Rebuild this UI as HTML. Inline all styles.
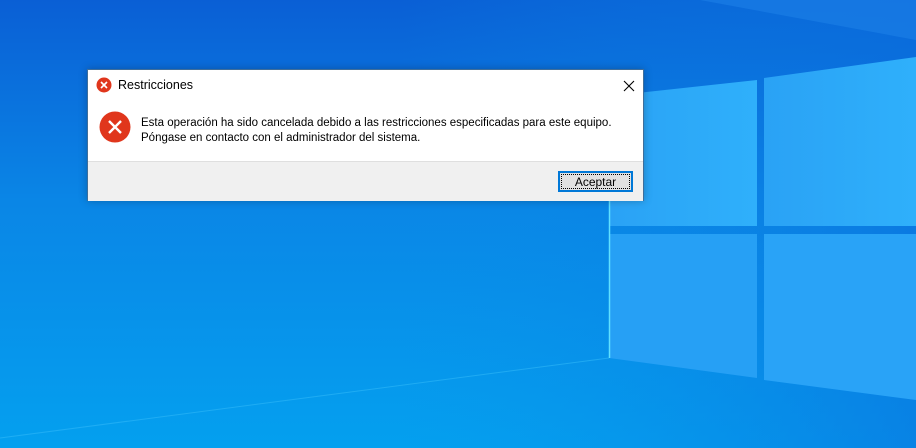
<!DOCTYPE html>
<html><head><meta charset="utf-8"><style>
body{margin:0;width:916px;height:448px;overflow:hidden;font-family:"Liberation Sans","DejaVu Sans",sans-serif;position:relative}
.bg{position:absolute;left:0;top:0}
.dlg{position:absolute;left:87px;top:69px;width:555px;height:130px;border:1px solid #3f6e9a;background:#fff;box-shadow:0 0 8px rgba(0,0,0,.25)}
.title{position:absolute;left:30px;top:8px;font-size:12.5px;color:#000}
.close{position:absolute;left:535px;top:10px}
.msg{position:absolute;left:53px;top:46px;font-size:11.5px;line-height:15px;color:#000}
.foot{position:absolute;left:0;top:91px;width:555px;height:39px;background:#f0f0f0;border-top:1px solid #dfdfdf}
.btn{position:absolute;left:470px;top:9px;width:73px;height:19px;border:1px solid #0078d7;box-shadow:inset 0 0 0 1px #0078d7;background:#e1e1e1;font-size:12px;text-align:center;line-height:19px;color:#000}
.btn span{position:absolute;left:2px;top:2px;right:2px;bottom:2px;border:1px dotted #000;line-height:15px}
</style></head><body>
<svg class="bg" width="916" height="448">
<defs>
<linearGradient id="g" x1="0" y1="0" x2="0" y2="1">
<stop offset="0" stop-color="#0a5fd5"/><stop offset="0.45" stop-color="#0a86e6"/><stop offset="1" stop-color="#04a0ef"/>
</linearGradient>
<linearGradient id="h" x1="0" y1="0" x2="1" y2="0">
<stop offset="0" stop-color="#0a8fe8" stop-opacity="0"/><stop offset="1" stop-color="#0a70de" stop-opacity=".6"/>
</linearGradient>
<linearGradient id="p" x1="0" y1="0" x2="1" y2="0">
<stop offset="0" stop-color="#2aa2f5"/><stop offset="1" stop-color="#2fb0fb"/>
</linearGradient>
</defs>
<rect width="916" height="448" fill="url(#g)"/>
<rect x="400" width="516" height="448" fill="url(#h)"/>
<polygon points="700,0 916,0 916,40" fill="#2a90f0" opacity=".35"/>
<line x1="0" y1="438" x2="609" y2="358" stroke="#30b8f8" stroke-width="1" opacity=".6"/>
<polygon points="609,96 757,80 757,226 609,226" fill="url(#p)"/>
<polygon points="764,78 916,57 916,226 764,226" fill="url(#p)"/>
<polygon points="609,234 757,234 757,378 609,358" fill="#26a0f5"/>
<polygon points="764,234 916,234 916,400 764,380" fill="#29a3f7"/>
<line x1="609.5" y1="96" x2="609.5" y2="358" stroke="#5fe0ff" stroke-width="1.5"/>
</svg>
<div class="dlg">
<svg style="position:absolute;left:8px;top:7px" width="16" height="16" viewBox="0 0 16 16"><circle cx="8" cy="8" r="7.5" fill="#e0361c"/><path d="M5 5L11 11M11 5L5 11" stroke="#fff" stroke-width="1.6"/></svg>
<div class="title">Restricciones</div>
<svg class="close" width="12" height="12" viewBox="0 0 12 12"><path d="M1 1L11 11M11 1L1 11" stroke="#000" stroke-width="1.1"/></svg>
<svg style="position:absolute;left:11px;top:41px" width="32" height="32" viewBox="0 0 32 32"><circle cx="16" cy="16" r="15.5" fill="#e0361c"/><path d="M10 10L22 22M22 10L10 22" stroke="#fff" stroke-width="2.4"/></svg>
<div class="msg">Esta operación ha sido cancelada debido a las restricciones especificadas para este equipo.<br>Póngase en contacto con el administrador del sistema.</div>
<div class="foot"><div class="btn"><span>Aceptar</span></div></div>
</div>
</body></html>
